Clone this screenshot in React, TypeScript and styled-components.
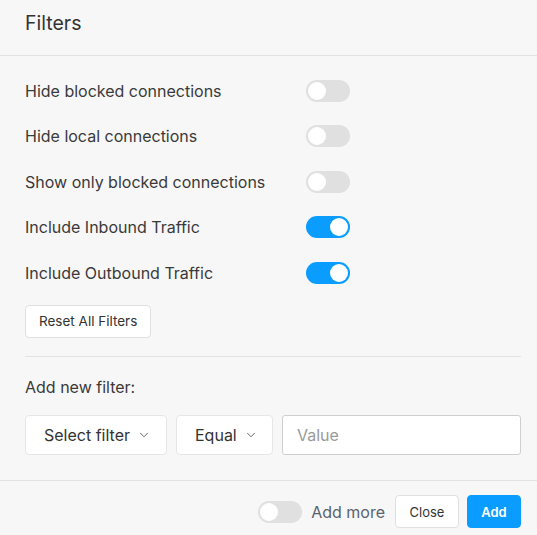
import { useState } from 'react'
import styled, { createGlobalStyle } from 'styled-components'
import { ChevronDown } from 'lucide-react'

const GlobalStyle = createGlobalStyle`
  html, body { margin: 0; padding: 0; background: #f7f7f7; }
  body { font-family: Inter, "Noto Sans", sans-serif; color: #333; }
  * { box-sizing: border-box; }
`

const filters = [
  { key: 'blocked', label: 'Hide blocked connections', on: false },
  { key: 'local', label: 'Hide local connections', on: false },
  { key: 'onlyBlocked', label: 'Show only blocked connections', on: false },
  { key: 'inbound', label: 'Include Inbound Traffic', on: true },
  { key: 'outbound', label: 'Include Outbound Traffic', on: true },
]

export default function App() {
  const [state, setState] = useState<Record<string, boolean>>(
    Object.fromEntries(filters.map((f) => [f.key, f.on]))
  )
  const [addMore, setAddMore] = useState(false)

  return (
    <Modal>
      <GlobalStyle />
      <Header>
        <Title>Filters</Title>
      </Header>

      <Body>
        <Rows>
          {filters.map((f) => (
            <Row key={f.key}>
              <RowLabel>{f.label}</RowLabel>
              <Toggle
                $on={state[f.key]}
                onClick={() => setState((s) => ({ ...s, [f.key]: !s[f.key] }))}
              />
            </Row>
          ))}
        </Rows>

        <ResetButton onClick={() => setState(Object.fromEntries(filters.map((f) => [f.key, f.on])))}>
          Reset All Filters
        </ResetButton>

        <Divider />

        <SectionLabel>Add new filter:</SectionLabel>
        <Controls>
          <Dropdown $width={142}>
            Select filter <ChevronDown size={14} strokeWidth={1.5} />
          </Dropdown>
          <Dropdown $width={97}>
            Equal <ChevronDown size={14} strokeWidth={1.5} />
          </Dropdown>
          <ValueInput placeholder="Value" />
        </Controls>
      </Body>

      <Footer>
        <Toggle $on={addMore} onClick={() => setAddMore((v) => !v)} />
        <FooterLabel>Add more</FooterLabel>
        <FooterButton $width={64}>Close</FooterButton>
        <FooterButton $width={54} $primary>Add</FooterButton>
      </Footer>
    </Modal>
  )
}

const Modal = styled.div`
  width: 537px;
  height: 535px;
  display: flex;
  flex-direction: column;
  background: #f7f7f7;
`

const Header = styled.div`
  height: 56px;
  padding: 10px 25px 0;
  border-bottom: 1px solid #e3e3e3;
`

const Title = styled.h1`
  margin: 0;
  font-size: 19.5px;
  font-weight: 400;
  line-height: 26px;
  color: #333;
`

const Body = styled.div`
  padding: 12px 16px 0 25px;
  display: flex;
  flex-direction: column;
  align-items: flex-start;
`

const Rows = styled.div`
  display: flex;
  flex-direction: column;
  width: 100%;
`

const Row = styled.div`
  display: grid;
  grid-template-columns: 281px auto;
  align-items: center;
  height: 45.5px;
`

const RowLabel = styled.span`
  font-size: 16px;
  color: #3a3a3a;
`

const Toggle = styled.button<{ $on: boolean }>`
  position: relative;
  width: 44px;
  height: 22px;
  padding: 0;
  border: none;
  border-radius: 11px;
  background: ${(p) => (p.$on ? '#0b9cff' : '#e0e0e0')};
  cursor: pointer;
  flex-shrink: 0;

  &::after {
    content: '';
    position: absolute;
    top: 2px;
    left: ${(p) => (p.$on ? '24px' : '2px')};
    width: 18px;
    height: 18px;
    border-radius: 50%;
    background: #fff;
  }
`

const ResetButton = styled.button`
  margin-top: 9px;
  height: 33px;
  padding: 0 13px;
  font-family: inherit;
  font-size: 13.5px;
  color: #333;
  background: #fff;
  border: 1px solid #e0e0e0;
  border-radius: 4px;
  cursor: pointer;
`

const Divider = styled.hr`
  width: 100%;
  margin: 18px 0 0;
  border: none;
  border-top: 1px solid #e3e3e3;
`

const SectionLabel = styled.div`
  margin-top: 20px;
  font-size: 16px;
  line-height: 20px;
  color: #3a3a3a;
`

const Controls = styled.div`
  margin-top: 18px;
  display: flex;
  gap: 9px;
  width: 100%;
`

const Dropdown = styled.button<{ $width: number }>`
  flex-shrink: 0;
  width: ${(p) => p.$width}px;
  height: 40px;
  padding: 0 18px;
  display: flex;
  align-items: center;
  gap: 7px;
  white-space: nowrap;
  font-family: inherit;
  font-size: 16px;
  color: #333;
  background: #fff;
  border: 1px solid #e6e6e6;
  border-radius: 4px;
  cursor: pointer;

  svg { color: #555; flex-shrink: 0; }
`

const ValueInput = styled.input`
  flex: 1;
  min-width: 0;
  height: 40px;
  padding: 0 14px;
  font-family: inherit;
  font-size: 16px;
  color: #333;
  background: #fff;
  border: 1px solid #cfcfcf;
  border-radius: 3px;
  outline: none;

  &::placeholder { color: #9a9a9a; }
`

const Footer = styled.div`
  margin-top: auto;
  height: 55px;
  padding: 7px 16px 0;
  border-top: 1px solid #e3e3e3;
  display: flex;
  align-items: center;
  justify-content: flex-end;
`

const FooterLabel = styled.span`
  margin: 0 10px 0 9px;
  font-size: 16px;
  color: #5a636d;
`

const FooterButton = styled.button<{ $primary?: boolean; $width: number }>`
  width: ${(p) => p.$width}px;
  height: 33px;
  padding: 0;
  margin-left: ${(p) => (p.$primary ? '8px' : '0')};
  font-family: inherit;
  font-size: 13px;
  font-weight: ${(p) => (p.$primary ? 600 : 400)};
  color: ${(p) => (p.$primary ? '#fff' : '#333')};
  background: ${(p) => (p.$primary ? '#0b9cff' : '#fff')};
  border: 1px solid ${(p) => (p.$primary ? '#0b9cff' : '#e0e0e0')};
  border-radius: 4px;
  cursor: pointer;
`
